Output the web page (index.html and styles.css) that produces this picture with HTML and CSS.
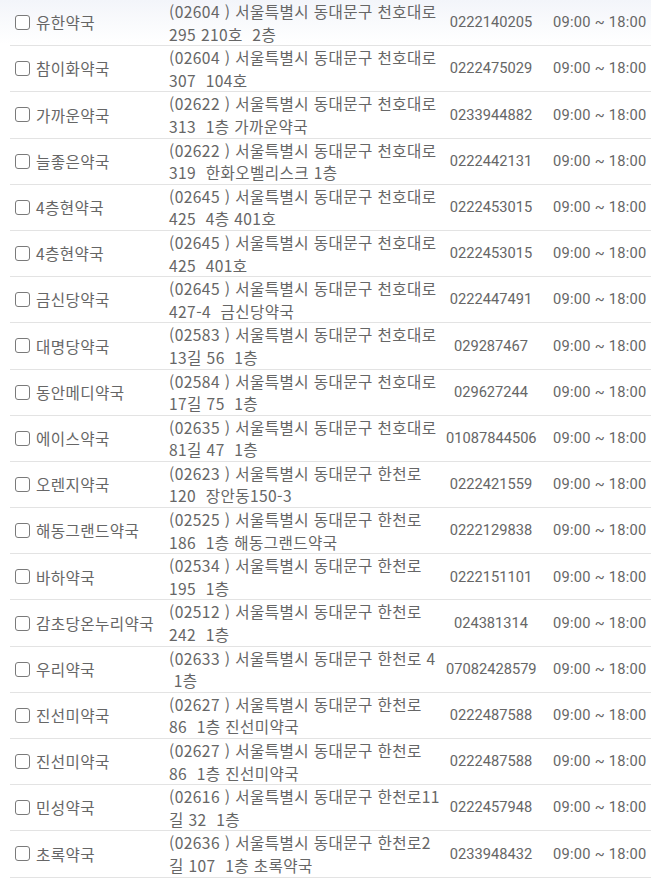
FILE: index.html
```html
<!DOCTYPE html>
<html lang="ko">
<head>
<meta charset="utf-8">
<title>약국 목록</title>
<link rel="stylesheet" href="styles.css">
</head>
<body>
<table class="list">
  <colgroup>
    <col class="c-name"><col class="c-addr"><col class="c-tel"><col class="c-time">
  </colgroup>
  <tbody>
    <tr><td class="name"><label><input type="checkbox">유한약국</label></td><td class="addr">(02604 ) 서울특별시 동대문구 천호대로<br>295 210호&nbsp; 2층</td><td class="tel">0222140205</td><td class="time">09:00 ~ 18:00</td></tr>
    <tr><td class="name"><label><input type="checkbox">참이화약국</label></td><td class="addr">(02604 ) 서울특별시 동대문구 천호대로<br>307&nbsp; 104호</td><td class="tel">0222475029</td><td class="time">09:00 ~ 18:00</td></tr>
    <tr><td class="name"><label><input type="checkbox">가까운약국</label></td><td class="addr">(02622 ) 서울특별시 동대문구 천호대로<br>313&nbsp; 1층 가까운약국</td><td class="tel">0233944882</td><td class="time">09:00 ~ 18:00</td></tr>
    <tr><td class="name"><label><input type="checkbox">늘좋은약국</label></td><td class="addr">(02622 ) 서울특별시 동대문구 천호대로<br>319&nbsp; 한화오벨리스크 1층</td><td class="tel">0222442131</td><td class="time">09:00 ~ 18:00</td></tr>
    <tr><td class="name"><label><input type="checkbox">4층현약국</label></td><td class="addr">(02645 ) 서울특별시 동대문구 천호대로<br>425&nbsp; 4층 401호</td><td class="tel">0222453015</td><td class="time">09:00 ~ 18:00</td></tr>
    <tr><td class="name"><label><input type="checkbox">4층현약국</label></td><td class="addr">(02645 ) 서울특별시 동대문구 천호대로<br>425&nbsp; 401호</td><td class="tel">0222453015</td><td class="time">09:00 ~ 18:00</td></tr>
    <tr><td class="name"><label><input type="checkbox">금신당약국</label></td><td class="addr">(02645 ) 서울특별시 동대문구 천호대로<br>427-4&nbsp; 금신당약국</td><td class="tel">0222447491</td><td class="time">09:00 ~ 18:00</td></tr>
    <tr><td class="name"><label><input type="checkbox">대명당약국</label></td><td class="addr">(02583 ) 서울특별시 동대문구 천호대로<br>13길 56&nbsp; 1층</td><td class="tel">029287467</td><td class="time">09:00 ~ 18:00</td></tr>
    <tr><td class="name"><label><input type="checkbox">동안메디약국</label></td><td class="addr">(02584 ) 서울특별시 동대문구 천호대로<br>17길 75&nbsp; 1층</td><td class="tel">029627244</td><td class="time">09:00 ~ 18:00</td></tr>
    <tr><td class="name"><label><input type="checkbox">에이스약국</label></td><td class="addr">(02635 ) 서울특별시 동대문구 천호대로<br>81길 47&nbsp; 1층</td><td class="tel">01087844506</td><td class="time">09:00 ~ 18:00</td></tr>
    <tr><td class="name"><label><input type="checkbox">오렌지약국</label></td><td class="addr">(02623 ) 서울특별시 동대문구 한천로<br>120&nbsp; 장안동150-3</td><td class="tel">0222421559</td><td class="time">09:00 ~ 18:00</td></tr>
    <tr><td class="name"><label><input type="checkbox">해동그랜드약국</label></td><td class="addr">(02525 ) 서울특별시 동대문구 한천로<br>186&nbsp; 1층 해동그랜드약국</td><td class="tel">0222129838</td><td class="time">09:00 ~ 18:00</td></tr>
    <tr><td class="name"><label><input type="checkbox">바하약국</label></td><td class="addr">(02534 ) 서울특별시 동대문구 한천로<br>195&nbsp; 1층</td><td class="tel">0222151101</td><td class="time">09:00 ~ 18:00</td></tr>
    <tr><td class="name"><label><input type="checkbox">감초당온누리약국</label></td><td class="addr">(02512 ) 서울특별시 동대문구 한천로<br>242&nbsp; 1층</td><td class="tel">024381314</td><td class="time">09:00 ~ 18:00</td></tr>
    <tr><td class="name"><label><input type="checkbox">우리약국</label></td><td class="addr">(02633 ) 서울특별시 동대문구 한천로 4<br>&nbsp;1층</td><td class="tel">07082428579</td><td class="time">09:00 ~ 18:00</td></tr>
    <tr><td class="name"><label><input type="checkbox">진선미약국</label></td><td class="addr">(02627 ) 서울특별시 동대문구 한천로<br>86&nbsp; 1층 진선미약국</td><td class="tel">0222487588</td><td class="time">09:00 ~ 18:00</td></tr>
    <tr><td class="name"><label><input type="checkbox">진선미약국</label></td><td class="addr">(02627 ) 서울특별시 동대문구 한천로<br>86&nbsp; 1층 진선미약국</td><td class="tel">0222487588</td><td class="time">09:00 ~ 18:00</td></tr>
    <tr><td class="name"><label><input type="checkbox">민성약국</label></td><td class="addr">(02616 ) 서울특별시 동대문구 한천로11<br>길 32&nbsp; 1층</td><td class="tel">0222457948</td><td class="time">09:00 ~ 18:00</td></tr>
    <tr><td class="name"><label><input type="checkbox">초록약국</label></td><td class="addr">(02636 ) 서울특별시 동대문구 한천로2<br>길 107&nbsp; 1층 초록약국</td><td class="tel">0233948432</td><td class="time">09:00 ~ 18:00</td></tr>
  </tbody>
</table>
</body>
</html>
```
FILE: styles.css
```css
html, body {
  margin: 0;
  padding: 0;
}
body {
  background: linear-gradient(#f3f5fa 0, #ffffff 44px) no-repeat;
  font-family: "Noto Sans CJK KR", sans-serif;
  font-size: 15.6px;
  letter-spacing: 0.4px;
  color: #666;
  overflow: hidden;
}
.list {
  margin: -1px 0 0 10px;
  width: 641px;
  table-layout: fixed;
  border-collapse: collapse;
}
.c-name { width: 154px; }
.c-addr { width: 277px; }
.c-tel { width: 100px; }
.c-time { width: 110px; }
.list td {
  padding: 0 5px;
  line-height: 22.6px;
  border-bottom: 1px solid #e3e3e3;
  vertical-align: middle;
  white-space: nowrap;
}
.list tr:first-child td {
  border-top: 1px solid transparent;
}
.name label {
  display: flex;
  align-items: center;
  gap: 6px;
  height: 45.2px;
}
.name input {
  appearance: none;
  -webkit-appearance: none;
  margin: 0;
  width: 15px;
  height: 15px;
  border: 1.5px solid #7a7a7a;
  border-radius: 3px;
  background: #fff;
  flex: none;
}
.addr {
  overflow: hidden;
}
.tel,
.time {
  font-family: Roboto, "Noto Sans CJK KR", sans-serif;
  font-size: 14.67px;
  letter-spacing: 0;
}
.tel {
  text-align: center;
}
.list td.time {
  padding-left: 12px;
  letter-spacing: 0.25px;
}
```
